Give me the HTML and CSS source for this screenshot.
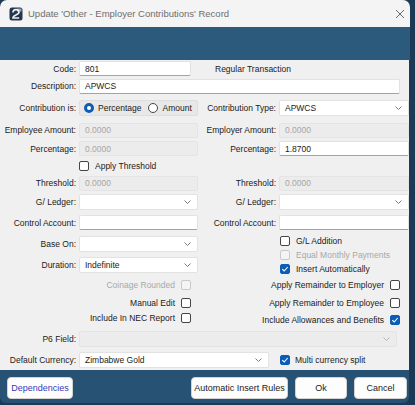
FILE: index.html
```html
<!DOCTYPE html>
<html lang="en">
<head>
    <meta charset="UTF-8">
    <title>Update 'Other - Employer Contributions' Record</title>
    <link rel="stylesheet" href="styles.css">
</head>
<body>

<div class="window">
    <div class="titlebar">
        <svg class="app-icon" width="14" height="14" viewBox="0 0 14 14">
            <rect x="0.5" y="0.5" width="13" height="13" rx="2.5" fill="#23364d"/>
            <rect x="8" y="1.5" width="4.5" height="3" fill="#9aa7b5"/>
            <path d="M4 5.6a3 3 0 0 1 6 0c0 2.2-6 2.3-6 5.4h6.2" stroke="#eeeeee" stroke-width="1.7" fill="none"/>
        </svg>
        <span class="title">Update 'Other - Employer Contributions' Record</span>
        <svg class="close" width="10" height="10" viewBox="0 0 10 10">
            <path d="M1 1L9 9M9 1L1 9" stroke="#5a5a5a" stroke-width="0.9"/>
        </svg>
    </div>
    <div class="band"></div>

    <div class="form">
        <div class="row h17">
            <span class="lbl">Code:</span>
            <div class="field code">801</div>
            <span class="note">Regular Transaction</span>
        </div>
        <div class="row h18">
            <span class="lbl">Description:</span>
            <div class="field desc">APWCS</div>
        </div>
        <div class="row h25">
            <span class="lbl">Contribution is:</span>
            <div class="radios">
                <span class="radio on"></span><span>Percentage</span>
                <span class="radio"></span><span>Amount</span>
            </div>
            <span class="lbl">Contribution Type:</span>
            <div class="field select">APWCS<svg class="chev" width="7" height="4" viewBox="0 0 7 4"><path d="M0.5 0.5L3.5 3.5L6.5 0.5" stroke="#7a7a7a" fill="none"/></svg></div>
        </div>
        <div class="row h20">
            <span class="lbl">Employee Amount:</span>
            <div class="field off">0.0000</div>
            <span class="lbl">Employer Amount:</span>
            <div class="field off">0.0000</div>
        </div>
        <div class="row h17">
            <span class="lbl">Percentage:</span>
            <div class="field off">0.0000</div>
            <span class="lbl">Percentage:</span>
            <div class="field">1.8700</div>
        </div>
        <div class="row h17">
            <span></span>
            <div class="check"><span class="cb"></span>Apply Threshold</div>
        </div>
        <div class="row h18">
            <span class="lbl">Threshold:</span>
            <div class="field off">0.0000</div>
            <span class="lbl">Threshold:</span>
            <div class="field off">0.0000</div>
        </div>
        <div class="row h20">
            <span class="lbl">G/ Ledger:</span>
            <div class="field select"><span></span><svg class="chev" width="7" height="4" viewBox="0 0 7 4"><path d="M0.5 0.5L3.5 3.5L6.5 0.5" stroke="#7a7a7a" fill="none"/></svg></div>
            <span class="lbl">G/ Ledger:</span>
            <div class="field select"><span></span><svg class="chev" width="7" height="4" viewBox="0 0 7 4"><path d="M0.5 0.5L3.5 3.5L6.5 0.5" stroke="#7a7a7a" fill="none"/></svg></div>
        </div>
        <div class="row h21">
            <span class="lbl">Control Account:</span>
            <div class="field"></div>
            <span class="lbl">Control Account:</span>
            <div class="field"></div>
        </div>

        <div class="lower">
            <div class="lower-left">
                <div class="row2 h21">
                    <span class="lbl">Base On:</span>
                    <div class="field select"><span></span><svg class="chev" width="7" height="4" viewBox="0 0 7 4"><path d="M0.5 0.5L3.5 3.5L6.5 0.5" stroke="#7a7a7a" fill="none"/></svg></div>
                </div>
                <div class="row2 h21">
                    <span class="lbl">Duration:</span>
                    <div class="field select">Indefinite<svg class="chev" width="7" height="4" viewBox="0 0 7 4"><path d="M0.5 0.5L3.5 3.5L6.5 0.5" stroke="#7a7a7a" fill="none"/></svg></div>
                </div>
                <div class="check-r left h19 dis">Coinage Rounded<span class="cb"></span></div>
                <div class="check-r left h17">Manual Edit<span class="cb"></span></div>
                <div class="check-r left h14">Include In NEC Report<span class="cb"></span></div>
            </div>
            <div class="lower-right">
                <div class="check-l h15"><span class="cb"></span>G/L Addition</div>
                <div class="check-l h14 dis"><span class="cb"></span>Equal Monthly Payments</div>
                <div class="check-l h14"><span class="cb on"><svg width="8" height="8" viewBox="0 0 8 8"><path d="M1.3 4.2L3.2 6L6.7 2" stroke="#fff" stroke-width="1.1" fill="none"/></svg></span>Insert Automatically</div>
                <div class="check-r right h18">Apply Remainder to Employer<span class="cb"></span></div>
                <div class="check-r right h17">Apply Remainder to Employee<span class="cb"></span></div>
                <div class="check-r right h17">Include Allowances and Benefits<span class="cb on"><svg width="8" height="8" viewBox="0 0 8 8"><path d="M1.3 4.2L3.2 6L6.7 2" stroke="#fff" stroke-width="1.1" fill="none"/></svg></span></div>
            </div>
        </div>

        <div class="row h22">
            <span class="lbl">P6 Field:</span>
            <div class="field select off p6"><span></span><svg class="chev" width="7" height="4" viewBox="0 0 7 4"><path d="M0.5 0.5L3.5 3.5L6.5 0.5" stroke="#b5b5b5" fill="none"/></svg></div>
        </div>
        <div class="row h19">
            <span class="lbl">Default Currency:</span>
            <div class="field select currency">Zimbabwe Gold<svg class="chev" width="7" height="4" viewBox="0 0 7 4"><path d="M0.5 0.5L3.5 3.5L6.5 0.5" stroke="#7a7a7a" fill="none"/></svg></div>
            <div class="check multi"><span class="cb on"><svg width="8" height="8" viewBox="0 0 8 8"><path d="M1.3 4.2L3.2 6L6.7 2" stroke="#fff" stroke-width="1.1" fill="none"/></svg></span>Multi currency split</div>
        </div>
    </div>

    <div class="footer">
        <div class="btn link deps">Dependencies</div>
        <div class="btn-group">
            <div class="btn auto">Automatic Insert Rules</div>
            <div class="btn ok">Ok</div>
            <div class="btn cancel">Cancel</div>
        </div>
    </div>
</div>

</body>
</html>
```

FILE: styles.css
```css
* {
    margin: 0;
    padding: 0;
    box-sizing: border-box;
}
body {
    background: #1a3a56;
    font-family: 'Liberation Sans', Arial, sans-serif;
    font-size: 8.5px;
    color: #1b1b1b;
}
.window {
    width: 410px;
}
.titlebar {
    height: 27px;
    background: #f4f4f4;
    border-radius: 7px 7px 0 0;
    display: flex;
    align-items: center;
    padding: 0 5px 0 9px;
}
.title {
    flex: 1;
    margin-left: 5px;
    font-size: 9.5px;
    color: #6e6e6e;
}
.band {
    height: 33px;
    background: #2b5a7d;
}
.form {
    width: 409px;
    background: #f0f0f0;
    padding-bottom: 1px;
}
.row {
    display: grid;
    grid-template-columns: 76px 119px 75px 130px;
    column-gap: 3px;
    align-items: center;
}
.row2 {
    display: grid;
    grid-template-columns: 76px 119px;
    column-gap: 3px;
    align-items: center;
}
.h14 { height: 14px; }
.h15 { height: 15px; }
.h17 { height: 17px; }
.h18 { height: 18px; }
.h19 { height: 19px; }
.h20 { height: 20px; }
.h21 { height: 21px; }
.h22 { height: 22px; }
.h25 { height: 25px; }
.lbl {
    text-align: right;
    white-space: nowrap;
}
.field {
    height: 15px;
    background: #fff;
    border: 1px solid #e2e2e2;
    border-bottom-color: #a3a3a3;
    border-radius: 2px;
    padding: 0 6px 0 5px;
    display: flex;
    align-items: center;
    justify-content: space-between;
    white-space: nowrap;
}
.field.select {
    height: 16px;
    border-bottom-color: #e2e2e2;
}
.field.off {
    background: #ececec;
    border-color: #e4e4e4;
    color: #a6a6a6;
}
.code {
    width: 112px;
}
.desc {
    grid-column: 2 / 5;
    width: 321px;
}
.note {
    grid-column: 3 / 5;
    padding-left: 14px;
}
.radios {
    height: 16px;
    background: #e8e8e8;
    border: 1px solid #dedede;
    border-radius: 2px;
    display: flex;
    align-items: center;
    padding-left: 4px;
    gap: 4px;
}
.radio {
    width: 10px;
    height: 10px;
    border-radius: 50%;
    border: 1px solid #444;
    background: #fff;
}
.radio + span + .radio {
    margin-left: 3px;
}
.radio.on {
    border: 3px solid #0c5db5;
    background: #fff;
}
.check, .check-l, .check-r {
    display: flex;
    align-items: center;
    white-space: nowrap;
}
.check, .check-l {
    gap: 6px;
}
.check-r {
    justify-content: flex-end;
    gap: 6px;
}
.check-r.left {
    padding-right: 10px;
}
.check-r.right {
    padding-right: 9px;
}
.check-l {
    padding-left: 79px;
}
.cb {
    width: 10px;
    height: 10px;
    border: 1px solid #454545;
    border-radius: 2px;
    background: #fff;
    display: flex;
    align-items: center;
    justify-content: center;
    flex: none;
}
.cb.on {
    background: #0c5db5;
    border-color: #0c5db5;
}
.dis {
    color: #a8a8a8;
}
.dis .cb {
    border-color: #c9c9c9;
    background: #f4f4f4;
}
.lower {
    display: grid;
    grid-template-columns: 201px 208px;
    align-items: start;
    height: 95px;
}
.p6 {
    grid-column: 2 / 5;
    width: 318px;
}
.currency {
    grid-column: 2 / 4;
    width: 190px;
}
.multi {
    grid-column: 4;
    padding-left: 1px;
    gap: 5px;
}
.footer {
    width: 409px;
    height: 33px;
    background: #285274;
    border-radius: 0 0 6px 6px;
    display: flex;
    justify-content: space-between;
    align-items: flex-start;
    padding: 7px 2px 0 7px;
}
.btn-group {
    display: flex;
    gap: 7px;
}
.btn {
    height: 22px;
    background: #fdfdfd;
    border: 1px solid #d3d3d3;
    border-radius: 4px;
    display: flex;
    align-items: center;
    justify-content: center;
    font-size: 9px;
    color: #1b1b1b;
}
.btn.link {
    color: #3a3ab8;
}
.deps { width: 66px; }
.auto { width: 97px; }
.ok { width: 52px; }
.cancel { width: 53px; }
```
